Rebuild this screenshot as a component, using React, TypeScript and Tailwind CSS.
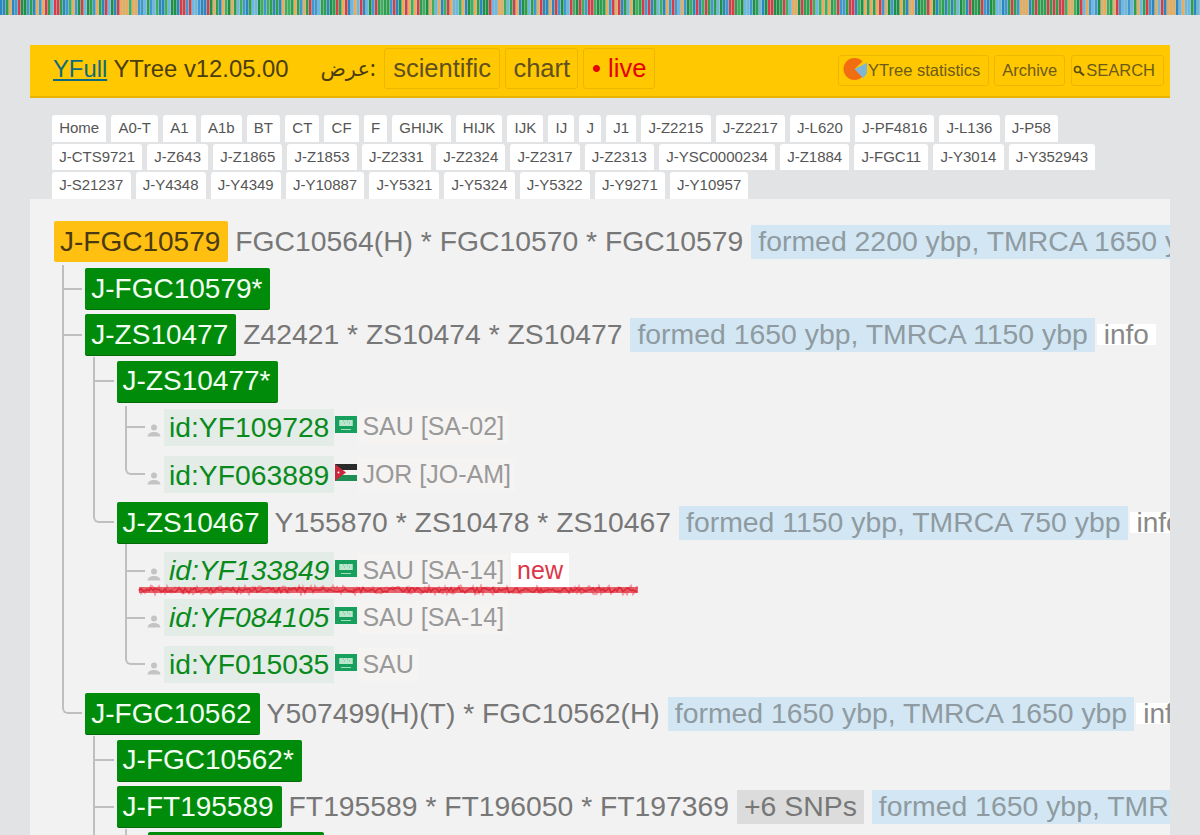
import React from 'react';

const tabRows = [
  'Home', 'A0-T', 'A1', 'A1b', 'BT', 'CT', 'CF', 'F', 'GHIJK', 'HIJK', 'IJK', 'IJ', 'J', 'J1', 'J-Z2215', 'J-Z2217', 'J-L620', 'J-PF4816', 'J-L136', 'J-P58',
  'J-CTS9721', 'J-Z643', 'J-Z1865', 'J-Z1853', 'J-Z2331', 'J-Z2324', 'J-Z2317', 'J-Z2313', 'J-YSC0000234', 'J-Z1884', 'J-FGC11', 'J-Y3014', 'J-Y352943',
  'J-S21237', 'J-Y4348', 'J-Y4349', 'J-Y10887', 'J-Y5321', 'J-Y5324', 'J-Y5322', 'J-Y9271', 'J-Y10957',
];

// small generator so the strip and the marker line stay the same on every render
const nextSeed = (s: number) => (s * 9301 + 49297) % 233280;

// the DNA strip along the top of the page
const stripes = (() => {
  const colors = ['#2f9e4f', '#3f97d6', '#dc3a4a', '#eda95c', '#1f8f45', '#6db6e6', '#3fae5f', '#2d86c4'];
  const out: { x: number; fill: string }[] = [];
  let seed = 17;
  for (let x = 0; x < 1200; x += 3) {
    seed = nextSeed(seed);
    out.push({ x, fill: colors[Math.floor((seed / 233280) * colors.length)] });
  }
  return out;
})();

const makeScribble = (start: number, spread: number) => {
  const pts: string[] = [];
  let seed = start;
  for (let x = 2; x < 502; x += 2) {
    seed = nextSeed(seed);
    pts.push(`${x},${6 - spread / 2 + (seed / 233280) * spread}`);
  }
  return pts.join(' ');
};

const DnaStrip = () => (
  <svg width="1200" height="15" className="block">
    <rect width="1200" height="15" fill="#a9cbb6" />
    {stripes.map((s) => (
      <rect key={s.x} x={s.x} y="0" width="2.4" height="15" fill={s.fill} />
    ))}
  </svg>
);

const SaudiFlag = () => (
  <svg width="22" height="17" viewBox="0 0 22 17" className="shrink-0">
    <rect width="22" height="17" fill="#17a05d" />
    <rect x="4" y="4" width="14" height="6" fill="#8fd4ad" />
    <path d="M5 5 H8 M9 5 H12 M13 5 H17 M5 7 H9 M10 7 H14 M15 7 H17 M5 9 H17" stroke="#e4f6ec" strokeWidth="1" />
    <rect x="6" y="13" width="10" height="1" fill="#9fdcba" />
  </svg>
);

const JordanFlag = () => (
  <svg width="22" height="17" viewBox="0 0 22 17" className="shrink-0">
    <rect width="22" height="6" fill="#2a2a2a" />
    <rect y="6" width="22" height="5" fill="#f4f4f4" />
    <rect y="11" width="22" height="6" fill="#1d8f55" />
    <polygon points="0,0 11,8.5 0,17" fill="#c8283c" />
    <circle cx="3.5" cy="8.5" r="1" fill="#fff" />
  </svg>
);

const Person = () => (
  <svg width="14" height="14" viewBox="0 0 14 14" className="-ml-px mt-1.5 shrink-0">
    <circle cx="7" cy="4.5" r="3" fill="#c4c4c4" />
    <path d="M0.5 13.5 C1 10 4 9 7 9 C10 9 13 10 13.5 13.5 Z" fill="#c4c4c4" />
  </svg>
);

const PieIcon = () => (
  <svg width="24" height="24" viewBox="0 0 24 24" className="-mt-1 shrink-0">
    <circle cx="11.5" cy="12" r="11" fill="#f26c12" />
    <path d="M11.5 12 L23 5 A12 12 0 0 1 20 21 Z" fill="#7fb6d6" />
    <path d="M11.5 12 L21 3 L23.5 6 Z" fill="#ffc800" />
  </svg>
);

const SearchIcon = () => (
  <svg width="12" height="12" viewBox="0 0 12 12" className="shrink-0">
    <circle cx="4.5" cy="4.5" r="3" fill="none" stroke="#5a4a10" strokeWidth="1.6" />
    <path d="M7 7 L11 10.5" stroke="#5a4a10" strokeWidth="2.2" />
  </svg>
);

type Cell = 'blank' | 'line' | 'tee' | 'end';

const Connector = ({ type }: { type: Cell }) => {
  if (type === 'blank') return <div className="w-[31.3px] shrink-0" />;
  if (type === 'line') {
    return (
      <div className="w-[31.3px] shrink-0 pl-[8px]">
        <div className="h-full w-full border-l-2 border-[#bfbfbf]" />
      </div>
    );
  }
  if (type === 'end') {
    return (
      <div className="w-[31.3px] shrink-0 pl-[8px] pr-[3px]">
        <div className="h-1/2 w-full rounded-bl-md border-b-2 border-l-2 border-[#bfbfbf]" />
      </div>
    );
  }
  return (
    <div className="w-[31.3px] shrink-0 pl-[8px] pr-[3px]">
      <div className="flex h-full w-full items-center border-l-2 border-[#bfbfbf]">
        <div className="h-0.5 w-full bg-[#bfbfbf]" />
      </div>
    </div>
  );
};

const Badge = ({ children }: { children: React.ReactNode }) => (
  <span className="flex h-[41px] shrink-0 items-center rounded-[2px] bg-[#008c0a] pl-[6px] pr-[8px] text-[28px] text-[#f2fff2] shadow-[0_1px_0_#006b08]">
    {children}
  </span>
);

const Snps = ({ children }: { children: React.ReactNode }) => (
  <span className="ml-[7px] shrink-0 text-[28.3px] text-[#777]">{children}</span>
);

const Formed = ({ children }: { children: React.ReactNode }) => (
  <span className="ml-2 flex h-[34px] shrink-0 items-center bg-[#d2e7f3] px-[7px] text-[28.4px] text-[#8f9aa1]">
    {children}
  </span>
);

const Info = () => (
  <span className="ml-0.5 flex h-[21px] shrink-0 items-center bg-white px-[7px] text-[28px] text-[#888]">info</span>
);

const Row = ({ cells, h, children }: { cells: Cell[]; h: string; children: React.ReactNode }) => (
  <div className={`flex ${h}`}>
    {cells.map((c, i) => (
      <Connector key={i} type={c} />
    ))}
    <div className="flex min-w-0 items-center">{children}</div>
  </div>
);

const Sample = ({
  id,
  italic,
  flag,
  place,
  isNew,
}: {
  id: string;
  italic?: boolean;
  flag: React.ReactNode;
  place: string;
  isNew?: boolean;
}) => (
  <>
    <Person />
    <span className={`ml-[3px] flex h-[37px] items-center bg-[#e3ece6] px-[5px] text-[28.3px] text-[#0a8a1c] ${italic ? 'italic' : ''}`}>
      {id}
    </span>
    <span className="mx-px -mt-[5px]">{flag}</span>
    <span className="flex h-[33px] items-center bg-[#f5f4f3] px-[4px] text-[25px] text-[#999]">{place}</span>
    {isNew && (
      <span className="ml-[3px] flex h-[35px] items-center bg-white px-[6px] text-[25px] text-[#dc3548]">new</span>
    )}
  </>
);

export default function App() {
  return (
    <div className="relative h-[835px] w-[1200px] overflow-hidden bg-[#e1e3e5] font-['Liberation_Sans',Arial,sans-serif]">
      <DnaStrip />

      <header className="mx-[30px] mt-[30px] flex h-[53px] items-center border-b-2 border-[#e8b400] bg-[#ffc800] pl-[23px] pr-[6px] text-[#4a3d10]">
        <span className="-mt-[3px] text-[23.8px]">
          <a href="#" className="text-[#0f6a80] underline">YFull</a> YTree v12.05.00
        </span>
        <span className="-mt-[3px] ml-8 font-['Noto_Sans','DejaVu_Sans',sans-serif] text-[21px]">عرض:</span>
        <nav className="-mt-[5px] ml-2 flex gap-[5px] text-[25.5px]">
          <a className="flex h-[41px] items-center rounded-[3px] border border-[#eab800] px-[8.5px] text-[#5f5020]">scientific</a>
          <a className="flex h-[41px] items-center rounded-[3px] border border-[#eab800] px-[7px] text-[#5f5020]">chart</a>
          <a className="flex h-[41px] items-center rounded-[3px] border border-[#eab800] px-2 text-[#e60000]">• live</a>
        </nav>
        <div className="ml-auto flex gap-[5px] text-[16.5px] text-[#6b5a1a]">
          <a className="flex h-[31px] items-center gap-px rounded-[3px] border border-[#eab800] pl-[4px] pr-2"><PieIcon />YTree statistics</a>
          <a className="flex h-[31px] items-center rounded-[3px] border border-[#eab800] px-[7px]">Archive</a>
          <a className="ml-px flex h-[31px] items-center gap-px rounded-[3px] border border-[#eab800] pl-px pr-2"><SearchIcon />SEARCH</a>
        </div>
      </header>

      <div className="relative ml-[52px] mt-[17px] flex w-[1060px] flex-wrap gap-x-[5px] gap-y-[2px]">
        {tabRows.map((t) => (
          <a key={t} className="flex h-[26.5px] items-center rounded-t-[3px] bg-white px-[7.15px] text-[15px] text-[#555]">{t}</a>
        ))}
      </div>

      <main className="mx-[30px] h-[640px] overflow-hidden whitespace-nowrap bg-[#f2f2f2] pl-6 pt-[19.5px]">
        <Row cells={[]} h="h-[47px]">
          <span className="flex h-[41px] shrink-0 items-center rounded-[2px] bg-[#ffc012] pl-[6px] pr-[8px] text-[28px] text-[#4a3a12]">J-FGC10579</span>
          <Snps>FGC10564(H) * FGC10570 * FGC10579</Snps>
          <Formed>formed 2200 ybp, TMRCA 1650 ybp</Formed>
          <Info />
        </Row>
        <Row cells={['tee']} h="h-[47px]">
          <Badge>J-FGC10579*</Badge>
        </Row>
        <Row cells={['tee']} h="h-[45px]">
          <Badge>J-ZS10477</Badge>
          <Snps>Z42421 * ZS10474 * ZS10477</Snps>
          <Formed>formed 1650 ybp, TMRCA 1150 ybp</Formed>
          <Info />
        </Row>
        <Row cells={['line', 'tee']} h="h-[48.5px]">
          <Badge>J-ZS10477*</Badge>
        </Row>
        <Row cells={['line', 'line', 'tee']} h="h-[43px]">
          <Sample id="id:YF109728" flag={<SaudiFlag />} place="SAU [SA-02]" />
        </Row>
        <Row cells={['line', 'line', 'end']} h="h-[52.5px]">
          <Sample id="id:YF063889" flag={<JordanFlag />} place="JOR [JO-AM]" />
        </Row>
        <Row cells={['line', 'end']} h="h-[43px]">
          <Badge>J-ZS10467</Badge>
          <Snps>Y155870 * ZS10478 * ZS10467</Snps>
          <Formed>formed 1150 ybp, TMRCA 750 ybp</Formed>
          <Info />
        </Row>
        <Row cells={['line', 'blank', 'tee']} h="h-[53px]">
          <Sample id="id:YF133849" italic flag={<SaudiFlag />} place="SAU [SA-14]" isNew />
        </Row>
        <Row cells={['line', 'blank', 'tee']} h="h-[41px]">
          <Sample id="id:YF084105" italic flag={<SaudiFlag />} place="SAU [SA-14]" />
        </Row>
        <Row cells={['line', 'blank', 'end']} h="h-[53px]">
          <Sample id="id:YF015035" flag={<SaudiFlag />} place="SAU" />
        </Row>
        <Row cells={['end']} h="h-[45px]">
          <Badge>J-FGC10562</Badge>
          <Snps>Y507499(H)(T) * FGC10562(H)</Snps>
          <Formed>formed 1650 ybp, TMRCA 1650 ybp</Formed>
          <Info />
        </Row>
        <Row cells={['blank', 'tee']} h="h-[48px]">
          <Badge>J-FGC10562*</Badge>
        </Row>
        <Row cells={['blank', 'tee']} h="h-[45px]">
          <Badge>J-FT195589</Badge>
          <Snps>FT195589 * FT196050 * FT197369</Snps>
          <span className="ml-2 flex h-[34px] shrink-0 items-center bg-[#dcdcdc] px-[7px] text-[28.4px] text-[#777]">+6 SNPs</span>
          <Formed>formed 1650 ybp, TMRCA 1650 ybp</Formed>
        </Row>
        <Row cells={['blank', 'line', 'tee']} h="h-[46px]">
          <Badge>J-FT195589*</Badge>
        </Row>
      </main>

      {/* red marker line drawn over the tree */}
      <svg width="504" height="12" className="absolute left-[137px] top-[584px] blur-[0.5px]">
        <polyline points={makeScribble(5, 9)} fill="none" stroke="#ee7f87" strokeWidth="2" opacity="0.7" />
        <line x1="2" y1="6" x2="501" y2="6" stroke="#e2323f" strokeWidth="6" opacity="0.75" />
        <polyline points={makeScribble(9, 5)} fill="none" stroke="#d92434" strokeWidth="1.5" opacity="0.9" />
      </svg>
    </div>
  );
}
